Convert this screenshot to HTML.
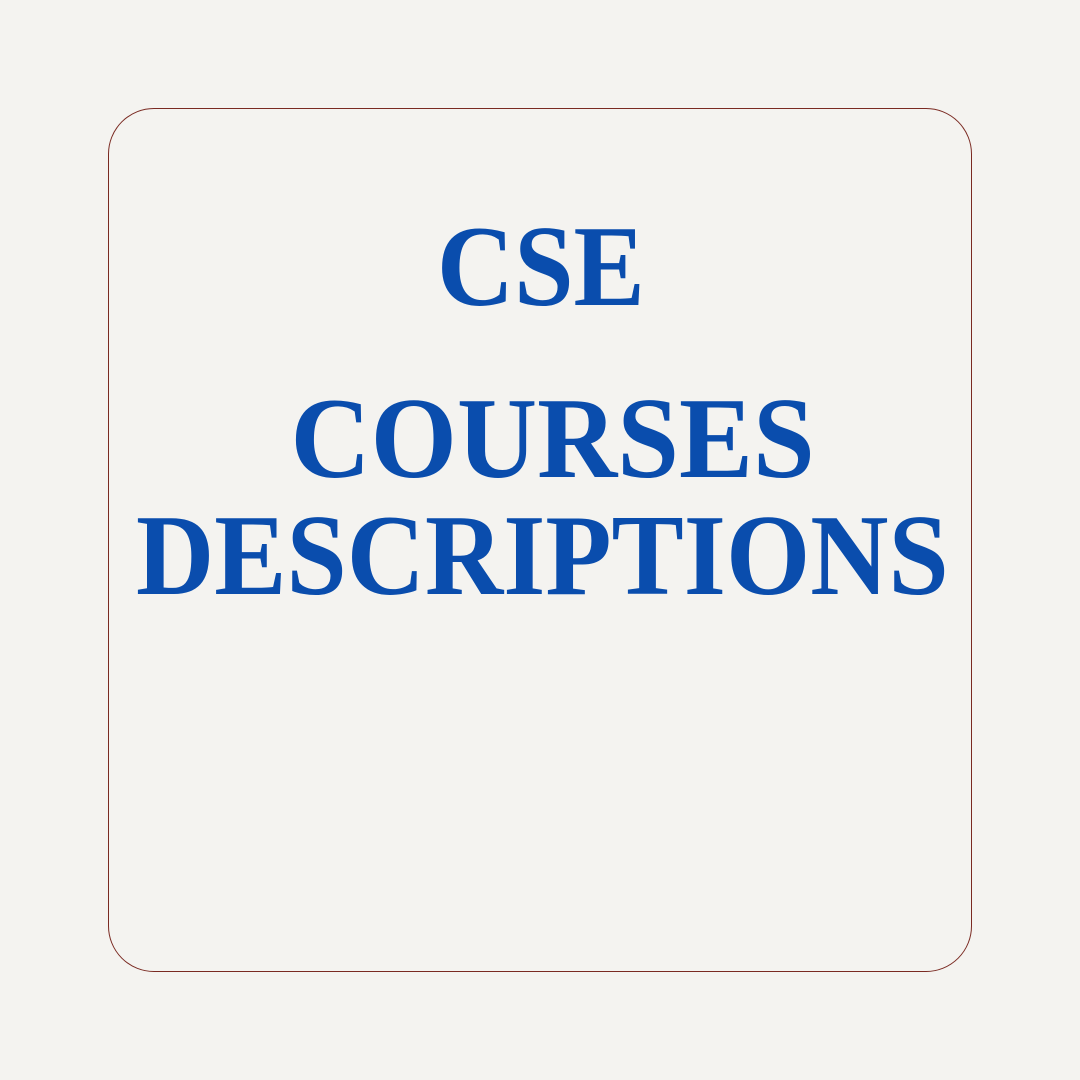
<!DOCTYPE html>
<html><head><meta charset="utf-8"><style>
html,body{margin:0;padding:0}
body{width:1080px;height:1080px;background:#f4f3f0;position:relative;overflow:hidden}
.box{position:absolute;left:108px;top:108px;width:864px;height:864px;border:1px solid #7a2a22;border-radius:46px;box-sizing:border-box}
.t{position:absolute;left:0;width:1080px;text-align:center;font-family:"Liberation Serif",serif;font-weight:bold;font-size:115px;line-height:115px;color:#0a4dad;white-space:nowrap}
.t span{display:inline-block}
</style></head><body>
<div class="box"></div>
<div class="t" style="top:209px;left:1px"><span style="transform:scaleX(0.93)">CSE</span></div>
<div class="t" style="top:381px;left:13px"><span style="transform:scaleX(0.965)">COURSES</span></div>
<div class="t" style="top:498px;left:2px"><span style="transform:scaleX(0.942)">DESCRIPTIONS</span></div>
</body></html>
